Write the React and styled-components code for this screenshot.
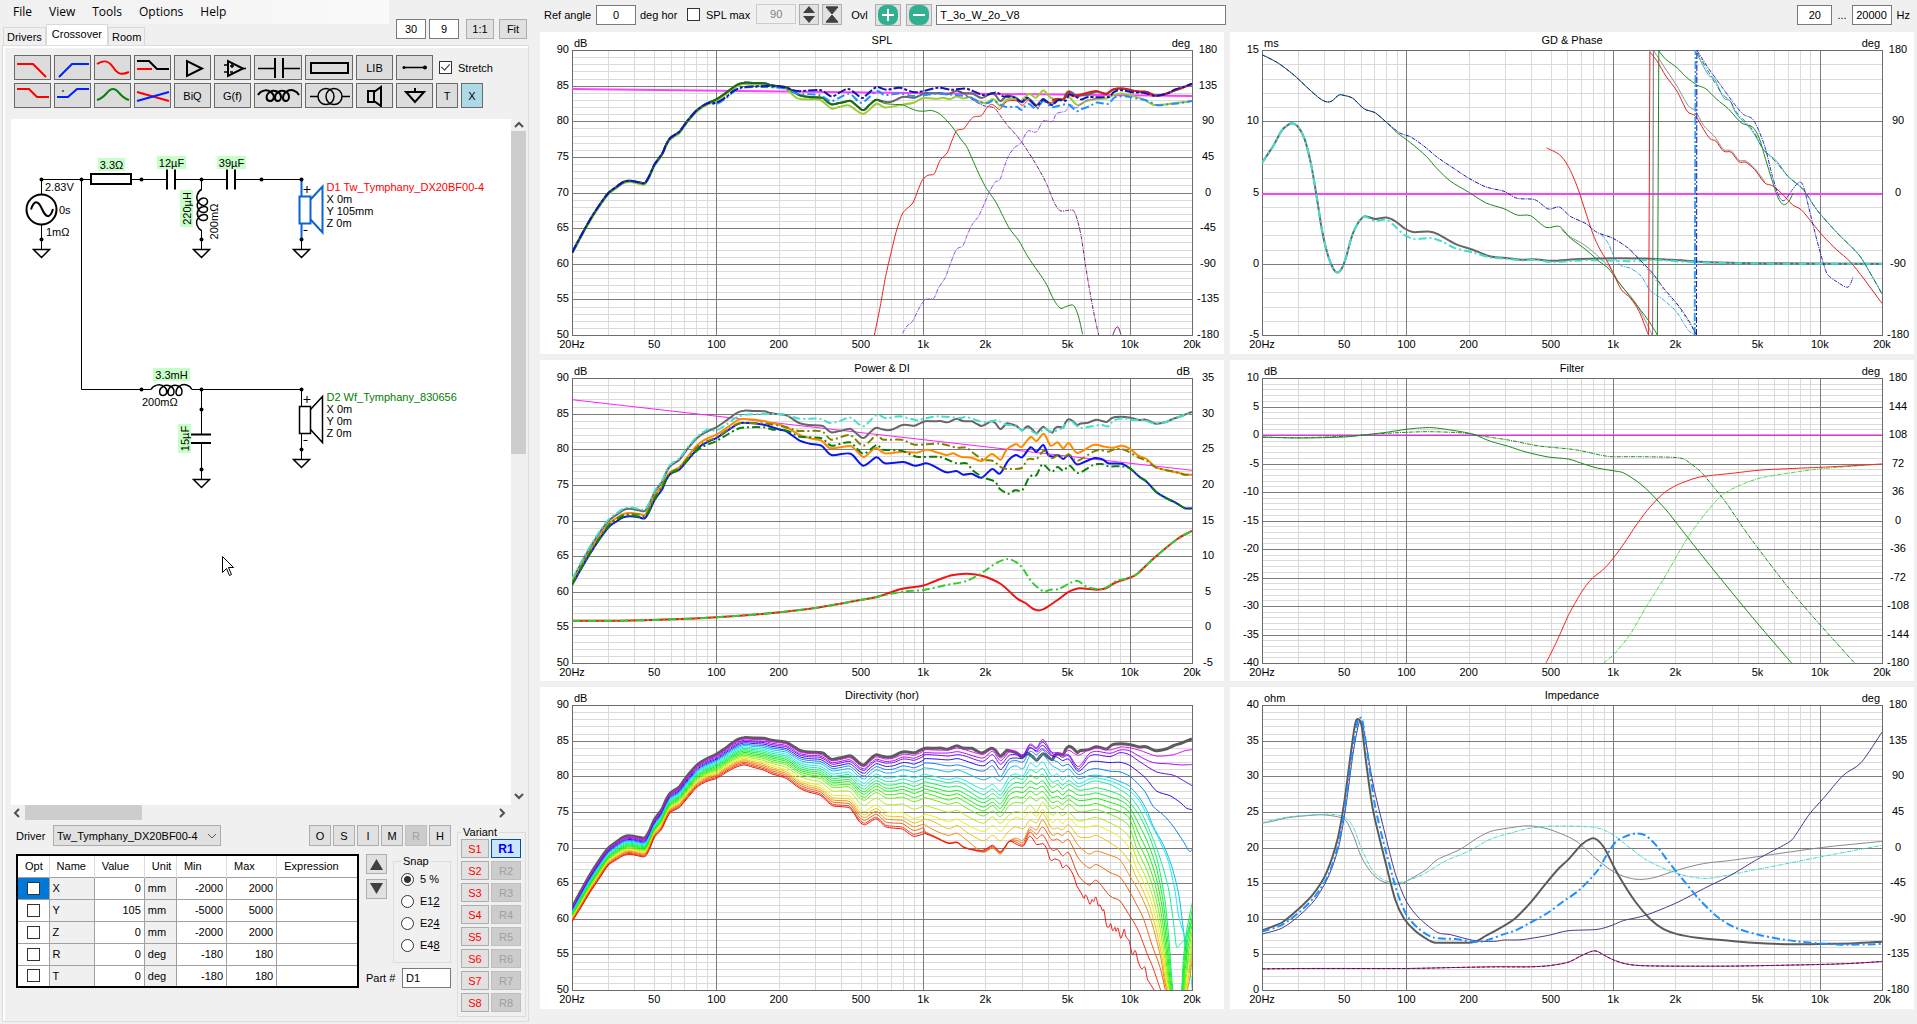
import React, { useLayoutEffect, useRef, useState } from "react";
import styled, { createGlobalStyle } from "styled-components";

/* ---------- curve data ---------- */

// [left, right, top, bottom] of the grid that a curve was digitised on
const SPL_GRID = [95, 1483, 152, 1005];
const SPL_FINE = [-623, 1236, -73, 780];
const PWR_GRID = [95, 1483, 82, 937];
const PWR_FINE = [-623, 1236, -53, 802];
const DIR_GRID = [95, 1483, 73, 934];
const DIR_FINE = [-923, 936, -32, 829];
const GD_GRID = [95, 1492, 152, 1005];
const FLT_GRID = [95, 1492, 82, 937];
const IMP_GRID = [95, 1492, 73, 934];

const trace = (grid, text) =>
  text
    .trim()
    .split(/\s+/)
    .map((pair) => {
      const [x, y] = pair.split(",").map(Number);
      return [(x - grid[0]) / (grid[1] - grid[0]), (y - grid[2]) / (grid[3] - grid[2])];
    });

const shift = (pts, dv) => pts.map(([u, v]) => [u, v + dv]);
const before = (pts, u) => pts.filter((p) => p[0] < u);

const axis = trace(
  PWR_GRID,
  `95,690 115,640 135,592 155,550 176,512 195,492 210,478 225,474 245,479 258,481 268,460 280,425 297,393 305,368
  315,346 335,328 345,310 355,292 372,266 385,252 400,241 418,230 435,215 450,200 465,186 480,180 500,181 525,182
  540,187 555,190 575,194 590,206 605,218 625,223 655,225 663,233 675,245 690,242 705,238 718,234 730,246 742,260
  750,261 760,248 770,236 777,231 790,236 802,239 815,235 830,225 840,222 862,225 872,219 882,213 890,211 905,212
  920,211 935,215 945,210 957,204 970,211 990,212 1000,219 1012,226 1022,220 1034,212 1043,218 1054,235 1066,221
  1070,218 1090,226 1102,239 1110,231 1116,227 1126,237 1135,248 1142,238 1150,228 1158,236 1170,246 1175,235
  1182,228 1195,230 1200,215 1207,206 1215,210 1226,224 1232,219 1250,216 1268,207 1280,210 1292,214 1305,201
  1323,198 1345,201 1365,208 1380,207 1402,219 1425,214 1440,205 1460,196 1475,188 1483,184`
);
const axisLow = before(axis, 0.225);
const axisMid = before(axis, 0.33);

const splCurves = [
  { c: "#ff40ff", w: 2, pts: trace(SPL_GRID, "95,269 1483,290") },
  {
    c: "#9acd32",
    w: 2,
    pts: [
      ...shift(axisMid, 0.005),
      ...trace(
        SPL_FINE,
        `0,38 20,44 50,70 80,75 120,76 155,102 180,97 208,93 250,118 290,88 315,99 360,92 400,85 430,71 470,73 490,70
        510,74 530,66 550,72 570,68 590,80 620,85 640,74 662,95 680,75 705,75 722,80 748,58 768,70 790,48 810,68
        825,75 845,78 865,66 892,92 920,80 950,74 980,72 1000,62 1025,57 1060,65 1090,75 1120,91 1150,90 1190,85 1236,80`
      ),
    ],
  },
  { c: "#666666", w: 2, pts: axis },
  { c: "#166b16", w: 2, pts: before(axis, 0.505) },
  {
    c: "#1c8a1c",
    pts: trace(
      SPL_GRID,
      `777,301 795,312 820,315 835,316 850,325 868,334 885,335 900,333 920,345 945,380 965,418 978,440 990,475 1005,520
      1020,560 1030,580 1045,610 1060,650 1075,688 1095,722 1110,758 1125,790 1140,818 1158,855 1170,890 1180,913
      1190,926 1200,920 1215,915 1222,925 1230,955 1238,1003`
    ),
  },
  {
    c: "#ee2020",
    pts: trace(
      SPL_GRID,
      `772,1005 785,920 797,830 810,755 820,700 832,650 840,632 858,610 870,570 880,540 892,527 905,524 912,505 920,480
      935,460 945,425 955,395 962,390 972,388 982,370 992,354 1000,351 1012,348 1022,328 1032,315 1040,318 1052,330
      1060,318 1070,305 1090,304 1103,318 1115,304 1122,308 1138,325 1150,302 1165,310 1180,300`
    ),
  },
  {
    c: "#d02020",
    w: 2,
    pts: trace(
      SPL_GRID,
      "1170,302 1180,299 1195,300 1207,278 1215,290 1235,285 1268,275 1290,283 1308,269 1330,267 1350,274 1380,277 1402,288 1430,280 1460,266 1483,254"
    ),
  },
  {
    c: "#7a1f7a",
    dash: "4 1 1 1",
    pts: trace(
      SPL_GRID,
      `960,275 980,290 1000,308 1020,320 1040,325 1052,345 1070,378 1085,400 1103,430 1125,475 1145,520 1160,560
      1170,595 1180,622 1190,634 1205,632 1217,632 1225,655 1235,710 1245,800 1255,880 1265,950 1274,1005`
    ),
  },
  { c: "#7a1f7a", pts: trace(SPL_GRID, "1306,1005 1312,985 1318,982 1324,1004") },
  {
    c: "#9346f0",
    dash: "4 1 1 1",
    pts: trace(
      SPL_GRID,
      `835,1000 845,978 857,965 870,930 885,900 905,895 915,865 930,835 940,800 955,750 970,738 980,705 992,672 1005,650
      1018,612 1030,575 1042,548 1053,540 1062,505 1072,470 1085,445 1100,430 1115,395 1135,397 1150,364 1170,366
      1180,342 1200,335 1210,315 1225,325 1245,303 1280,296`
    ),
  },
  {
    c: "#1e90ff",
    w: 2,
    dash: "8 3 2 3",
    pts: [
      ...axisLow,
      ...trace(SPL_GRID, "418,314 440,296 455,279 475,266 500,263 530,263"),
      ...trace(
        SPL_FINE,
        `0,40 20,44 55,58 120,62 155,80 208,58 245,85 290,50 315,62 360,57 405,65 470,58 530,62 570,68 600,83 625,86
        640,78 665,92 680,98 710,97 725,106 745,88 770,104 790,80 815,98 840,93 865,90 890,110 905,104 930,95 950,84
        985,88 1005,68 1040,66 1060,70 1100,78 1130,92 1160,90 1190,87 1236,80`
      ),
    ],
  },
  {
    c: "#1414b4",
    w: 2,
    dash: "9 2 3 2",
    pts: [
      ...axisLow,
      ...trace(SPL_GRID, "418,310 440,293 455,276 475,264 500,261 530,260"),
      ...trace(
        SPL_FINE,
        `0,36 20,40 55,50 120,47 155,66 180,54 208,44 245,70 262,60 290,38 320,46 360,40 400,53 430,50 475,40 515,46
        555,42 580,50 612,62 650,54 670,66 700,68 725,82 742,70 770,95 790,75 815,92 835,77 858,78 868,60 890,68
        905,75 925,68 985,68 1000,54 1020,47 1060,54 1090,55 1125,64 1160,58 1185,45 1215,36 1236,28`
      ),
    ],
  },
];

const gdStart =
  "95,166 130,190 165,225 200,268 225,297 240,307 252,305 268,287 280,288 300,297 325,328 350,340 375,368";
const gdRing =
  "95,490 120,440 140,392 155,375 163,371 175,380 190,415 205,490 218,590 230,690 242,760 255,805 265,818 275,805 285,770 295,720 305,685 320,655";

const gdCurves = [
  { c: "#ff40ff", w: 2, pts: trace(GD_GRID, "95,583 1492,583") },
  {
    c: "#909090",
    pts: trace(GD_GRID, "770,690 790,712 815,730 840,755 880,805 900,850 935,905 960,965 974,1005"),
  },
  { c: "#707070", straight: true, pts: trace(GD_GRID, "975,1005 977,152") },
  {
    c: "#909090",
    pts: trace(
      GD_GRID,
      "978,155 1000,200 1030,260 1055,318 1072,335 1090,378 1115,412 1135,450 1152,453 1170,482 1185,484 1205,506 1228,547"
    ),
  },
  {
    c: "#666666",
    w: 2,
    pts: trace(
      GD_GRID,
      `${gdRing} 330,650 350,658 375,653 395,664 415,685 435,697 470,695 490,702 530,732 570,750 610,770 650,775 680,780
      710,778 750,783 800,778 850,776 900,775 960,776 1020,780 1100,787 1200,790 1492,792`
    ),
  },
  {
    c: "#40e0d0",
    w: 2,
    dash: "8 3 2 3",
    pts: trace(
      GD_GRID,
      `${gdRing} 330,652 350,664 375,660 395,680 415,705 440,718 475,715 500,725 530,745 570,758 610,773 650,777 680,782
      710,780 750,787 800,783 850,781 920,784 980,780 1050,786 1200,791 1492,792`
    ),
  },
  {
    c: "#1c8a1c",
    pts: trace(
      GD_GRID,
      `${gdStart} 400,400 430,430 465,470 490,508 520,545 560,577 600,610 640,627 670,646 700,648 735,683 765,680
      790,715 825,750 855,785 875,805 895,840 930,900 965,960 986,1005`
    ),
  },
  { c: "#1c8a1c", straight: true, pts: trace(GD_GRID, "986,1005 989,152") },
  {
    c: "#1c8a1c",
    pts: trace(
      GD_GRID,
      `989,155 1005,180 1030,205 1050,232 1075,257 1095,268 1120,300 1145,327 1175,370 1200,382 1215,415 1230,480
      1245,545 1258,595 1270,615 1282,605 1292,580`
    ),
  },
  {
    c: "#ee2020",
    pts: trace(
      GD_GRID,
      "736,445 765,465 785,500 805,560 820,620 840,700 855,745 875,790 890,830 905,870 925,895 945,935 965,1003"
    ),
  },
  { c: "#ee2020", straight: true, pts: trace(GD_GRID, "966,1005 969,156") },
  {
    c: "#dd2020",
    pts: trace(
      GD_GRID,
      `969,158 985,185 1005,230 1030,275 1053,335 1072,350 1090,390 1105,418 1118,425 1135,455 1152,458 1170,487
      1185,488 1205,510 1228,550 1245,558 1265,580 1290,615 1310,630 1335,670 1360,710 1390,750 1420,785 1450,835
      1475,880 1492,910`
    ),
  },
  {
    c: "#3a9cf0",
    dash: "4 1 1 1",
    pts: trace(
      GD_GRID,
      "860,705 875,730 890,775 905,798 925,805 950,830 970,872 1000,900 1030,938 1055,990 1068,1002"
    ),
  },
  { c: "#3a9cf0", w: 2, dash: "8 2 2 2", straight: true, pts: trace(GD_GRID, "1070,1005 1072,152") },
  {
    c: "#3a9cf0",
    pts: trace(
      GD_GRID,
      "1074,160 1100,225 1115,240 1135,295 1150,305 1165,345 1200,395 1225,450 1255,485 1280,530 1315,570 1345,630 1395,705 1440,765 1470,830 1492,882"
    ),
  },
  {
    c: "#1c8a1c",
    dash: "5 2 1 2",
    pts: trace(
      GD_GRID,
      "1076,160 1100,215 1130,280 1150,305 1165,340 1200,390 1225,450 1255,490 1280,530 1315,570 1345,630 1395,705 1440,765 1470,830 1492,882"
    ),
  },
  {
    c: "#1c8a1c",
    dash: "1 4",
    pts: trace(GD_GRID, "925,750 950,790 975,828 1000,872 1035,925 1060,975 1073,1003"),
  },
  {
    c: "#1414b4",
    dash: "4 1 1 1",
    pts: trace(
      GD_GRID,
      `${gdStart} 405,400 430,412 460,440 490,473 520,500 560,535 600,562 640,575 670,596 710,600 740,628 765,622
      790,650 825,672 850,698 885,715 920,745 950,785 975,820 1000,865 1035,920 1060,970 1073,1003`
    ),
  },
  { c: "#1414b4", dash: "6 2 2 2", straight: true, pts: trace(GD_GRID, "1074,1005 1075,152") },
  {
    c: "#2a2ac8",
    dash: "4 1 1 1",
    pts: trace(
      GD_GRID,
      `1076,155 1100,205 1130,260 1160,315 1180,345 1200,358 1215,395 1230,450 1245,530 1260,590 1272,602 1290,570
      1305,548 1315,560 1330,640 1345,720 1360,790 1370,825 1395,850 1412,862 1420,855 1427,830`
    ),
  },
];

const diTail = "1340,683 1360,670 1400,620 1450,565 1483,541";
const diHead = "95,810 200,810 320,806 418,800 520,790 640,772 740,748";
const blueTail = "1050,218 1080,245 1100,258 1130,290 1160,308 1190,323 1215,338 1236,338";

const powerCurves = [
  { c: "#ff20ff", pts: trace(PWR_GRID, "95,147 1483,359") },
  { c: "#666666", w: 2, pts: axis },
  {
    c: "#40e0d0",
    w: 2,
    dash: "8 3 2 3",
    pts: [
      ...shift(axisLow, -0.005),
      ...trace(PWR_GRID, "418,240 440,222 460,203 480,193 520,190"),
      ...trace(
        PWR_FINE,
        `0,55 20,58 60,69 120,69 150,82 180,76 212,66 250,92 290,58 320,68 360,62 410,74 430,70 475,62 540,67 560,64
        612,80 650,74 680,87 710,90 725,105 740,96 770,114 795,98 815,108 845,98 870,75 890,90 905,97 960,88 985,92
        1000,75 1030,68 1060,73 1090,73 1125,84 1165,77 1190,66 1236,50`
      ),
    ],
  },
  {
    c: "#ff8c00",
    w: 2,
    pts: [
      ...trace(
        PWR_GRID,
        `95,698 135,603 176,522 195,502 210,490 225,487 245,490 258,493 268,472 280,436 297,405 305,382 315,364 335,350
        350,325 372,288 385,273 400,262 418,252 445,228 465,209 480,205 525,211 540,217`
      ),
      ...trace(
        PWR_FINE,
        `0,87 30,100 60,118 100,130 125,135 150,157 180,155 215,152 250,184 275,165 290,156 315,173 370,168 410,171
        440,162 465,168 500,178 520,173 545,184 575,186 605,196 636,175 662,192 680,162 708,145 725,154 752,124
        770,136 792,114 812,150 833,140 850,158 867,142 892,172 940,148 975,153 1000,156 1025,150 1048,158 1075,180
        1100,190 1130,216 1190,230 1215,237 1236,237`
      ),
    ],
  },
  {
    c: "#0a14ee",
    w: 2,
    pts: [
      ...trace(
        PWR_GRID,
        `95,703 135,610 176,531 195,512 210,500 225,497 245,500 258,503 268,482 280,448 297,416 305,390 315,370 335,357
        350,334 372,300 385,284 400,273 418,262 445,238 465,221 480,216 525,222 540,228`
      ),
      ...trace(
        PWR_FINE,
        `0,102 20,107 60,135 90,144 125,150 155,178 212,174 250,210 290,185 315,203 370,199 405,210 440,203 465,213
        500,230 530,226 550,237 575,234 605,246 637,220 660,234 685,195 708,178 727,185 752,155 770,168 790,148
        805,178 820,183 833,178 850,190 867,178 890,206 915,198 945,187 970,192 985,203 1025,204 ${blueTail}`
      ),
    ],
  },
  {
    c: "#808000",
    w: 2,
    dash: "8 3 2 3",
    pts: [
      ...trace(
        PWR_GRID,
        `95,700 135,605 176,524 195,504 210,492 225,489 245,492 258,495 268,474 280,438 297,407 305,384 315,366 335,352
        350,329 372,294 385,280 400,270 418,260 445,236 465,219 480,217 525,218 540,221`
      ),
      ...trace(
        PWR_FINE,
        `0,90 30,98 60,106 125,107 155,132 210,118 250,150 290,119 310,132 365,132 405,147 480,144 530,156 560,156
        580,172 610,192 640,196 665,216 690,220 725,217 745,190 770,190 792,165 815,188 835,178 850,187 867,176
        892,195 940,168 960,163 985,168 1000,162 1025,160 1045,168 1075,185 1100,195 1130,216 1190,230 1215,237 1236,237`
      ),
    ],
  },
  {
    c: "#0a800a",
    w: 2,
    dash: "8 3 2 3",
    pts: [
      ...trace(
        PWR_GRID,
        `95,702 135,608 176,528 195,508 210,497 225,494 245,498 258,500 268,480 280,446 297,412 305,389 315,370 335,356
        350,334 372,303 385,290 400,281 418,271 445,250 465,235 485,230 525,230 545,237`
      ),
      ...trace(
        PWR_FINE,
        `0,100 30,108 60,123 125,128 155,150 210,140 250,174 290,148 310,162 365,165 410,183 480,184 530,203 560,203
        580,225 610,245 645,258 660,280 685,294 705,284 727,284 745,250 758,238 770,238 788,206 815,228 833,214
        850,225 870,210 895,232 940,208 965,205 985,212 1025,212 ${blueTail}`
      ),
    ],
  },
  {
    c: "#f01414",
    w: 2,
    pts: trace(
      PWR_GRID,
      `${diHead} 780,738 830,716 880,705 910,690 945,674 980,669 1015,676 1055,700 1090,742 1110,757 1128,775 1142,779
      1158,770 1185,745 1205,725 1230,713 1270,717 1290,713 1310,697 ${diTail}`
    ),
  },
  {
    c: "#32cd32",
    w: 2,
    dash: "8 3 2 3",
    pts: trace(
      PWR_GRID,
      `${diHead} 800,732 840,722 882,718 930,704 980,690 1020,660 1045,637 1070,625 1090,635 1105,655 1125,695
      1150,722 1165,717 1185,715 1210,697 1228,691 1250,710 1285,714 1315,690 ${diTail}`
    ),
  },
];

const filterCurves = [
  { c: "#ff10ff", pts: trace(FLT_GRID, "95,253 1492,253") },
  {
    c: "#1c8a1c",
    pts: trace(
      FLT_GRID,
      `95,259 180,262 280,259 330,252 380,244 420,236 450,232 480,231 520,238 560,247 580,255 610,272 650,287 690,304
      740,319 785,325 820,340 850,352 890,361 910,367 940,392 965,420 985,448 1010,485 1060,570 1120,670 1200,800 1288,937`
    ),
  },
  {
    c: "#1c8a1c",
    dash: "4 1 1 1",
    pts: trace(
      FLT_GRID,
      `95,260 180,261 280,257 350,250 420,245 475,243 550,247 590,256 650,268 720,286 800,297 860,314 885,318 940,318
      1020,320 1045,325 1060,338 1085,365 1110,405 1140,455 1200,570 1300,742 1430,937`
    ),
  },
  {
    c: "#44dd44",
    dash: "4 1 1 1",
    pts: trace(
      FLT_GRID,
      `865,937 890,908 925,850 960,770 1000,685 1050,570 1090,495 1130,435 1170,405 1210,385 1250,374 1350,355 1492,340`
    ),
  },
  {
    c: "#ff2020",
    pts: trace(
      FLT_GRID,
      `735,937 760,870 785,795 810,735 825,705 840,682 865,655 885,625 910,580 940,520 970,468 1000,428 1030,403
      1075,381 1110,374 1160,367 1220,358 1300,353 1400,347 1492,340`
    ),
  },
];

const minimumLoad = trace(
  IMP_GRID,
  `95,870 200,869 420,869 530,866 620,864 700,864 745,860 785,850 815,830 838,817 850,817 865,828 885,842 915,855
  960,861 1100,862 1200,861 1350,857 1420,854 1492,848`
);

const impedanceCurves = [
  {
    c: "#888888",
    pts: trace(
      IMP_GRID,
      `95,430 120,424 150,414 190,408 235,405 280,418 300,465 320,535 345,585 370,608 405,614 430,598 465,570 490,540
      540,510 580,475 610,455 650,445 695,438 740,448 800,482 850,540 885,575 915,593 945,600 980,594 1030,572
      1090,552 1160,541 1300,514 1380,500 1492,485`
    ),
  },
  {
    c: "#40d8cc",
    dash: "4 1 1 1",
    pts: trace(
      IMP_GRID,
      `95,429 150,412 200,406 250,403 280,412 300,440 320,510 345,575 370,602 400,610 430,600 460,583 510,543 560,515
      610,478 660,458 700,445 750,439 840,442 880,460 920,500 960,540 1010,572 1060,592 1100,597 1140,588 1240,562
      1380,525 1492,497`
    ),
  },
  {
    c: "#503488",
    pts: trace(
      IMP_GRID,
      `95,765 140,747 180,708 215,660 245,590 268,500 285,370 300,220 312,135 318,122 326,160 345,310 370,450 395,580
      420,665 450,718 490,760 520,767 575,785 620,787 640,783 680,782 740,769 785,755 850,751 885,738 910,724 960,708
      1030,670 1090,628 1150,588 1210,540 1240,518 1285,485 1300,460 1330,400 1360,355 1405,285 1445,247 1492,155`
    ),
  },
  {
    c: "#5c5c5c",
    w: 2,
    pts: trace(
      IMP_GRID,
      `95,754 140,730 175,692 210,645 240,580 265,480 280,370 295,220 305,130 312,116 320,140 330,250 345,390 370,530
      395,660 415,718 440,755 470,783 485,791 520,791 570,790 600,770 640,740 665,718 700,670 730,620 760,572 785,540
      815,495 838,476 850,480 865,502 880,540 900,592 935,665 970,720 1000,750 1030,765 1075,776 1130,783 1200,791
      1290,796 1350,795 1430,793 1492,788`
    ),
  },
  {
    c: "#1e90ff",
    w: 2,
    dash: "8 3 2 3",
    pts: trace(
      IMP_GRID,
      `95,758 140,737 180,698 215,650 245,585 268,490 283,370 298,220 310,125 316,112 322,125 335,240 350,380 375,520
      400,640 420,705 445,745 480,775 530,780 580,789 610,780 640,765 665,755 700,730 740,700 775,665 810,632 850,575
      870,530 890,490 910,472 938,461 960,468 985,500 1010,545 1040,595 1080,660 1120,712 1160,745 1220,769 1300,787
      1400,797 1492,795`
    ),
  },
  { c: "#e01848", pts: minimumLoad },
  { c: "#301898", dash: "3 2", pts: minimumLoad },
];

/* ---------- directivity fan: 20 off-axis angles ---------- */

const rear = trace(
  DIR_GRID,
  `95,728 115,685 135,640 155,600 176,558 195,540 212,527 225,524 240,528 258,531 268,510 280,472 295,450 305,422
  315,398 335,383 350,360 372,325 385,312 400,302 418,295 440,277 460,262 480,254 500,261 525,270 540,280 555,286
  575,295 590,310 605,325 625,336 650,345 663,360 678,377 695,380 715,383 725,398 738,425 750,435 760,428 775,417
  785,425 797,441 815,445 835,448 850,462 862,470 882,462`
);

const midWeights = [
  0.03, 0.065, 0.09, 0.135, 0.18, 0.23, 0.3, 0.35, 0.4, 0.445, 0.485, 0.535, 0.585, 0.675, 0.785, 0.84, 0.885, 0.93,
  0.975, 1,
];

// level of every angle at a set of frequencies above 1 kHz
const fanColumns = {
  135: [103, 112, 118, 130, 143, 158, 177, 188, 200, 212, 222, 234, 248, 272, 298, 312, 330, 350, 353, 356],
  165: [104, 113, 119, 131, 145, 162, 184, 194, 207, 219, 230, 242, 256, 280, 306, 322, 347, 365, 367, 368],
  205: [104, 113, 122, 134, 152, 170, 193, 203, 216, 229, 242, 255, 268, 292, 320, 342, 362, 384, 385, 386],
  232: [98, 109, 118, 130, 149, 164, 188, 199, 213, 226, 236, 248, 262, 286, 313, 332, 355, 382, 383, 384],
  255: [103, 114, 122, 136, 154, 172, 196, 208, 222, 236, 248, 260, 276, 300, 326, 348, 372, 398, 399, 400],
  308: [117, 128, 138, 152, 168, 194, 222, 238, 252, 263, 276, 288, 303, 325, 350, 378, 412, 412, 410, 407],
  338: [101, 108, 118, 135, 152, 184, 208, 222, 236, 250, 262, 272, 288, 306, 332, 362, 400, 398, 395, 392],
  362: [128, 136, 147, 163, 184, 197, 227, 240, 250, 266, 280, 292, 305, 325, 350, 378, 418, 415, 413, 411],
  388: [106, 110, 120, 132, 142, 160, 185, 200, 216, 228, 240, 256, 272, 300, 320, 348, 380, 380, 380, 380],
  408: [108, 112, 118, 128, 136, 152, 176, 188, 202, 216, 230, 245, 262, 290, 308, 336, 370, 376, 382, 388],
  430: [120, 118, 122, 128, 140, 160, 182, 192, 204, 218, 232, 248, 264, 292, 312, 342, 376, 383, 390, 394],
  450: [96, 86, 90, 98, 108, 122, 145, 164, 180, 198, 216, 228, 245, 270, 290, 316, 338, 345, 352, 364],
  470: [110, 96, 100, 106, 118, 133, 155, 172, 190, 208, 222, 240, 258, 290, 304, 324, 345, 358, 372, 389],
  489: [100, 72, 80, 90, 104, 118, 140, 160, 178, 198, 214, 230, 246, 262, 285, 296, 315, 337, 361, 387],
  515: [122, 110, 114, 120, 132, 150, 182, 200, 216, 232, 246, 262, 280, 300, 322, 340, 360, 375, 405, 437],
  533: [112, 112, 118, 126, 140, 160, 176, 196, 208, 226, 244, 258, 274, 292, 312, 340, 356, 373, 405, 434],
  548: [118, 122, 126, 136, 152, 170, 195, 210, 222, 240, 252, 268, 284, 302, 326, 345, 362, 384, 424, 460],
  567: [105, 118, 122, 132, 148, 162, 180, 196, 208, 224, 240, 254, 268, 292, 310, 330, 350, 376, 415, 462],
  595: [120, 154, 162, 168, 178, 190, 205, 215, 225, 240, 256, 272, 290, 318, 335, 365, 392, 430, 482, 522],
  627: [102, 116, 124, 142, 164, 182, 192, 202, 222, 238, 254, 270, 288, 312, 336, 368, 418, 460, 512, 565],
  650: [98, 108, 118, 138, 160, 180, 188, 198, 218, 234, 250, 266, 284, 308, 332, 362, 409, 450, 498, 552],
  690: [104, 114, 124, 142, 168, 188, 197, 208, 228, 246, 262, 280, 298, 324, 350, 384, 422, 474, 545, 636],
  720: [95, 104, 112, 141, 170, 199, 210, 224, 240, 256, 272, 290, 312, 340, 368, 405, 436, 488, 560, 656],
  748: [97, 106, 118, 150, 182, 213, 226, 243, 262, 276, 292, 310, 335, 368, 400, 440, 482, 530, 603, 682],
};

const fanTails = {
  1: "780,105 830,122 880,118 915,106 937,103",
  2: "780,124 820,142 870,146 900,149 937,148",
  3: "780,140 830,170 880,180 910,196 937,212",
  4: "780,174 800,192 830,228 870,242 900,262 920,280 937,284",
  5: "765,197 795,230 820,275 850,300 880,335 910,380 928,410 937,404",
  6: "780,250 800,285 820,335 850,390 870,440 885,490 898,550 907,620 915,690 925,775 931,740 937,690",
  7: "780,260 810,320 840,380 865,440 885,530 895,600 905,640 914,665 925,720 937,829",
  8: "780,285 810,350 840,430 865,520 880,620 888,690 892,700 905,685 915,675 937,620",
};
const firstTail = [[780, 305], [810, 370], [835, 450], [855, 560], [868, 690], [880, 835], [903, 835], [910, 740], [920, 650], [937, 565]];
const lastTail = [[765, 510], [785, 548], [805, 595], [825, 660], [843, 735], [864, 835], [918, 835], [924, 820], [930, 790], [937, 735]];

for (let k = 9; k <= 17; k++) {
  const t = (k - 9) / 8;
  fanTails[k] = firstTail
    .map(([x, y], i) => `${x + (lastTail[i][0] - x) * t},${y + (lastTail[i][1] - y) * t}`)
    .join(" ");
}
fanTails[18] = "765,562 790,612 815,690 840,760 856,829";
fanTails[19] = "765,630 780,662 800,715 820,765 842,829";
fanTails[20] = "757,722 766,710 775,745 785,765 795,760 802,795 812,812 822,829";

const rearRipple =
  "500,402 512,437 525,433 540,440 548,460 560,452 575,472 583,490 590,512 600,530 606,540 612,552 616,543 620,545 630,570 636,556 641,562 648,548 655,575 660,572 668,590 672,588 680,635 688,638 692,628 698,650 705,640 708,652 714,642 722,672 728,660 733,645 738,668 748,682";

const hues = [295, 281, 265, 248, 210, 194, 178, 158, 142, 128, 118, 110, 96, 78, 62, 48, 34, 22, 12, 0];

const valueAt = (pts, u) => {
  const i = Math.max(1, pts.findIndex((p) => p[0] >= u));
  const [a, b] = [pts[i - 1], pts[i]];
  return a[1] + ((b[1] - a[1]) * (u - a[0])) / (b[0] - a[0]);
};

const fanCurve = (k) => {
  const low = rear.map(([u, v]) => {
    const front = valueAt(axis, u);
    const mix = Math.min(1, Math.max(0, (u - 0.25) / 0.25));
    const weight = (k / 20) * (1 - mix) + midWeights[k - 1] * mix;
    return [u, front + (v - front) * weight];
  });
  const columns = Object.entries(fanColumns)
    .filter(([x]) => k < 20 || Number(x) < 500)
    .map(([x, levels]) => `${x},${levels[k - 1]}`)
    .join(" ");
  const high = `${columns} ${k === 20 ? rearRipple : ""} ${fanTails[k]}`;
  return { c: `hsl(${hues[k - 1]}, 88%, 50%)`, pts: [...low, ...trace(DIR_FINE, high)] };
};

const directivityCurves = [
  { c: "#5c5c5c", w: 3, pts: axis },
  ...Array.from({ length: 20 }, (_, i) => fanCurve(i + 1)),
];

/* ---------- chart ---------- */

const steps = (from, to, step) => {
  const list = [];
  for (let v = from; step < 0 ? v >= to : v <= to; v += step) list.push(v);
  return list;
};

const charts = [
  { title: "SPL", unit: "dB", top: 90, bottom: 50, unitRight: "deg", right: steps(180, -180, -45), curves: splCurves },
  { title: "GD & Phase", unit: "ms", top: 15, bottom: -5, unitRight: "deg", right: steps(180, -180, -90), curves: gdCurves },
  { title: "Power & DI", unit: "dB", top: 90, bottom: 50, unitRight: "dB", right: steps(35, -5, -5), curves: powerCurves },
  { title: "Filter", unit: "dB", top: 10, bottom: -40, unitRight: "deg", right: steps(180, -180, -36), curves: filterCurves },
  { title: "Directivity (hor)", unit: "dB", top: 90, bottom: 50, curves: directivityCurves },
  { title: "Impedance", unit: "ohm", top: 40, bottom: 0, unitRight: "deg", right: steps(180, -180, -45), curves: impedanceCurves },
];

const freqLabels = [
  [20, "20Hz"],
  [50, "50"],
  [100, "100"],
  [200, "200"],
  [500, "500"],
  [1000, "1k"],
  [2000, "2k"],
  [5000, "5k"],
  [10000, "10k"],
  [20000, "20k"],
];
const freqLines = [10, 100, 1000, 10000]
  .flatMap((d) => steps(1, 9, 1).map((n) => n * d))
  .filter((f) => f > 20 && f < 20000);
const logPos = (f) => Math.log10(f / 20) / 3;

const pathOf = ({ pts, straight }, px, py) => {
  const p = pts.map(([u, v]) => [px(u), py(v)]);
  let d = `M${p[0][0].toFixed(1)} ${p[0][1].toFixed(1)}`;
  for (let i = 1; i < p.length; i++) {
    if (straight || p.length < 3) {
      d += `L${p[i][0].toFixed(1)} ${p[i][1].toFixed(1)}`;
      continue;
    }
    const a = p[Math.max(0, i - 2)];
    const b = p[i - 1];
    const c = p[i];
    const e = p[Math.min(p.length - 1, i + 1)];
    const nums = [b[0] + (c[0] - a[0]) / 7, b[1] + (c[1] - a[1]) / 7, c[0] - (e[0] - b[0]) / 7, c[1] - (e[1] - b[1]) / 7, c[0], c[1]];
    d += `C${nums.map((n) => n.toFixed(1)).join(" ")}`;
  }
  return d;
};

const Chart = ({ title, unit, top, bottom, unitRight, right = [], curves }) => {
  const box = useRef(null);
  const [size, setSize] = useState({ w: 684, h: 321 });

  useLayoutEffect(() => {
    const measure = () => setSize({ w: box.current.clientWidth, h: box.current.clientHeight });
    measure();
    const observer = new ResizeObserver(measure);
    observer.observe(box.current);
    return () => observer.disconnect();
  }, []);

  const left = 32;
  const width = size.w - 64;
  const y0 = 18;
  const height = size.h - 37;
  const px = (u) => left + u * width;
  const py = (v) => y0 + v * height;
  const line = (n) => Math.round(n) + 0.5;
  const span = top - bottom;
  const clip = `clip-${title.replace(/\W/g, "")}`;

  return (
    <ChartCard ref={box}>
      <ChartSvg role="img" aria-label={title}>
        <clipPath id={clip}>
          <rect x={left} y={y0} width={width} height={height} />
        </clipPath>
        {freqLines.map((f) => (
          <line key={f} x1={line(px(logPos(f)))} x2={line(px(logPos(f)))} y1={y0} y2={y0 + height} stroke="#dadada" />
        ))}
        {steps(bottom, top, 1).map((v) => (
          <line key={v} x1={left} x2={left + width} y1={line(py((top - v) / span))} y2={line(py((top - v) / span))} stroke="#dadada" />
        ))}
        {[100, 1000, 10000].map((f) => (
          <line key={f} x1={line(px(logPos(f)))} x2={line(px(logPos(f)))} y1={y0} y2={y0 + height} stroke="#7c7c7c" />
        ))}
        {steps(bottom, top, 5).map((v) => (
          <line key={v} x1={left} x2={left + width} y1={line(py((top - v) / span))} y2={line(py((top - v) / span))} stroke="#7c7c7c" />
        ))}
        <rect x={left + 0.5} y={y0 + 0.5} width={width} height={height} fill="none" stroke="#6c6c6c" />
        <g clipPath={`url(#${clip})`} fill="none" strokeLinejoin="round">
          {curves.map((curve, i) => (
            <path key={i} d={pathOf(curve, px, py)} stroke={curve.c} strokeWidth={curve.w || 1} strokeDasharray={curve.dash} />
          ))}
        </g>
        <text x={left + width / 2} y="12" textAnchor="middle">
          {title}
        </text>
        <text x={left + 2} y="15">
          {unit}
        </text>
        <text x={left + width - 2} y="15" textAnchor="end">
          {unitRight}
        </text>
        {steps(bottom, top, 5).map((v) => (
          <text key={v} x={left - 3} y={py((top - v) / span) + 3} textAnchor="end">
            {v}
          </text>
        ))}
        {right.map((v, i) => (
          <text key={v} x={left + width + 16} y={py(i / (right.length - 1)) + 3} textAnchor="middle">
            {v}
          </text>
        ))}
        {freqLabels.map(([f, label]) => (
          <text key={f} x={px(logPos(f))} y={y0 + height + 13} textAnchor="middle">
            {label}
          </text>
        ))}
      </ChartSvg>
    </ChartCard>
  );
};

/* ---------- schematic ---------- */

const Ground = ({ x, y }) => (
  <g fill="none">
    <path d={`M${x} ${y}v10`} stroke="#000" />
    <path d={`M${x - 8} ${y + 10}h16l-8 8z`} stroke="#000" strokeWidth="1.5" />
  </g>
);

const Nodes = ({ at }) => at.map(([x, y]) => <circle key={`${x}-${y}`} cx={x} cy={y} r="2" />);

const Tag = ({ x, y, w, children }) => (
  <g>
    <rect x={x} y={y} width={w} height="13" fill="#c8ffc8" />
    <text x={x + w / 2} y={y + 11} textAnchor="middle">
      {children}
    </text>
  </g>
);

const VerticalTag = ({ x, y, h, plain, children }) => (
  <g>
    {!plain && <rect x={x} y={y} width="13" height={h} fill="#c8ffc8" />}
    <text transform={`translate(${x + 11} ${y + h / 2}) rotate(-90)`} textAnchor="middle">
      {children}
    </text>
  </g>
);

const coilPath =
  "M0 0C2 -4 9 -7 14 -2C18 2 15 6 12 6C8 6 7 0 12 -3C16 -6 23 -3 23 2C23 5 21 6 20 6C16 6 16 0 20 -3C25 -6 31 -3 31 2C31 5 29 6 28 6C24 6 24 0 28 -3C33 -7 39 -4 41 0";

const Driver = ({ x, y, color, name, nameColor, pos, active }) => (
  <g>
    <path d={`M${x} ${y}v17M${x} ${y + 44}v16`} stroke={color} strokeWidth={active ? 2 : 1} />
    <rect x={x - 2} y={y + 17} width="11" height="27" fill="#fff" stroke={color} strokeWidth={active ? 2 : 1.5} />
    <path d={`M${x + 9} ${y + 20}l12 -13v46l-12 -13`} fill="none" stroke={color} strokeWidth={active ? 2 : 1.5} />
    <path d={`M${x + 2} ${y + 10}h7M${x + 5.5} ${y + 6.5}v7M${x + 2} ${y + 51}h4`} stroke="#000" />
    <text x={x + 25} y={y + 11} fill={nameColor}>
      {name}
    </text>
    {pos.map((line, i) => (
      <text key={line} x={x + 25} y={y + 23 + i * 12}>
        {line}
      </text>
    ))}
  </g>
);

const Schematic = () => (
  <SchematicSvg viewBox="11 119 500 680" width="500" height="680" role="img" aria-label="Crossover schematic">
    <path
      d="M41.5 179.5H90M41.5 179.5V194M41.5 225V240M131 179.5H167M175 179.5H227M235 179.5H301.5M81.5 179.5V389.5H151M192 389.5H301.5M201.5 179.5V190M201.5 230V240M201.5 389.5V434M201.5 443V469.5"
      fill="none"
      stroke="#000"
    />
    <circle cx="41.5" cy="209.5" r="15" fill="none" stroke="#000" strokeWidth="2" />
    <path d="M31 209.5C34 200 38 200 42 209S50 219 53 209" fill="none" stroke="#000" strokeWidth="2" />
    <rect x="91" y="174" width="40" height="10" fill="#fff" stroke="#000" strokeWidth="2" />
    <path d="M167 169.500v20M175 169.500v20M227 169.500v20M235 169.500v20M191 434.500h20M191 443h20" stroke="#000" strokeWidth="2" />
    <path d={coilPath} transform="translate(151 389.500)" fill="none" stroke="#000" strokeWidth="1.500" />
    <path d={coilPath} transform="translate(201.500 189.500) rotate(90) scale(1 -1)" fill="none" stroke="#000" strokeWidth="1.500" />
    <Ground x={41.5} y={239.5} />
    <Ground x={201.5} y={239.5} />
    <Ground x={301.5} y={239.5} />
    <Ground x={201.5} y={469.5} />
    <Ground x={301.5} y={449.5} />
    <Driver
      x={301.5}
      y={179.5}
      color="#0a64d2"
      active
      name="D1 Tw_Tymphany_DX20BF00-4"
      nameColor="#ff0000"
      pos={["X 0m", "Y 105mm", "Z 0m"]}
    />
    <Driver
      x={301.5}
      y={389.5}
      color="#000"
      name="D2 Wf_Tymphany_830656"
      nameColor="#008000"
      pos={["X 0m", "Y 0m", "Z 0m"]}
    />
    <Nodes
      at={[
        [41.5, 179.5], [81.5, 179.5], [141.5, 179.5], [201.5, 179.5], [261.5, 179.5], [301.5, 179.5],
        [41.5, 239.5], [201.5, 239.5], [301.5, 239.5], [141.5, 389.5], [201.5, 389.5], [301.5, 389.5],
        [201.5, 409.5], [201.5, 469.5], [301.5, 449.5],
      ]}
    />
    <Tag x={98} y={158} w={27}>3.3Ω</Tag>
    <Tag x={157} y={156} w={29}>12µF</Tag>
    <Tag x={217} y={156} w={29}>39µF</Tag>
    <Tag x={153} y={368} w={37}>3.3mH</Tag>
    <VerticalTag x={180} y={190} h={37}>220µH</VerticalTag>
    <VerticalTag x={207} y={204} h={35} plain>200mΩ</VerticalTag>
    <VerticalTag x={178} y={424} h={29}>15µF</VerticalTag>
    <text x="45" y="191">2.83V</text>
    <text x="59" y="214">0s</text>
    <text x="46" y="236">1mΩ</text>
    <text x="142" y="406">200mΩ</text>
    <path d="M222.500 556.500v16l4 -4 3 7 2 -1 -3 -7h5z" fill="#fff" stroke="#000" />
  </SchematicSvg>
);

/* ---------- toolbar icons, drawn on a 37 x 25 or 48 x 25 button ---------- */

const Glyph = ({ w = 35, children }) => (
  <svg width={w} height="23" viewBox={`1 1 ${w} 23`} fill="none" stroke="#000" strokeWidth="2" aria-hidden="true">
    {children}
  </svg>
);

const toolRows = [
  [
    { name: "Low pass", icon: <Glyph><path d="M3 9H19L32 22" stroke="#f00" /></Glyph> },
    { name: "High pass", icon: <Glyph><path d="M5 22L18 9H35" stroke="#0020ff" /></Glyph> },
    { name: "Phase", icon: <Glyph><path d="M3 9C9 5 14 5 19 12C24 20 28 20 35 17" stroke="#f00" /></Glyph> },
    {
      name: "Shelving",
      icon: <Glyph><path d="M3 14H18" stroke="#f00" /><path d="M3 6H15L23 14H35" /></Glyph>,
    },
    { name: "Buffer", icon: <Glyph><path d="M13 6V21L28 13.500Z" /></Glyph> },
    {
      name: "Op amp",
      icon: <Glyph><path d="M14 6V21L29 13.500Z" /><path d="M10 10H14M10 17H14M29 13.500H32M16 11H20M18 9V13M16 17H19" strokeWidth="1.500" /></Glyph>,
    },
    {
      name: "Capacitor",
      wide: true,
      icon: <Glyph w={46}><path d="M4 13.500H21M29 13.500H46" strokeWidth="1.500" /><path d="M21 3V23M29 3V23" /></Glyph>,
    },
    { name: "Resistor", wide: true, icon: <Glyph w={46}><rect x="6" y="8" width="37" height="10" /></Glyph> },
    { name: "Library", label: "LIB" },
    {
      name: "Wire",
      icon: <Glyph><path d="M8 12.500H29" strokeWidth="1.500" /><circle cx="8" cy="12.500" r="1.500" fill="#000" stroke="none" /><circle cx="29" cy="12.500" r="2" fill="#000" stroke="none" /></Glyph>,
    },
  ],
  [
    { name: "Low shelf", icon: <Glyph><path d="M3 6H15L23 14H35" stroke="#f00" /></Glyph> },
    {
      name: "High shelf",
      icon: <Glyph><path d="M3 14H14L23 6H35" stroke="#0020ff" /><circle cx="9" cy="8" r="1" fill="#444" stroke="none" /></Glyph>,
    },
    { name: "Peak", icon: <Glyph><path d="M3 17C13 14 13 6 19 6S25 14 35 17" stroke="#0a800a" /></Glyph> },
    {
      name: "Cross",
      icon: <Glyph><path d="M3 9L35 18" stroke="#f00" /><path d="M3 18L35 9" stroke="#0020ff" /></Glyph>,
    },
    { name: "Biquad", label: "BiQ" },
    { name: "Transfer function", label: "G(f)" },
    { name: "Inductor", wide: true, icon: <Glyph w={46}><path d={coilPath} transform="translate(4 12)" /></Glyph> },
    {
      name: "Transformer",
      wide: true,
      icon: <Glyph w={46}><path d="M5 13.500H13M37 13.500H45" strokeWidth="1.500" /><circle cx="21" cy="13.500" r="8" strokeWidth="1.500" /><circle cx="29" cy="13.500" r="8" strokeWidth="1.500" /></Glyph>,
    },
    { name: "Speaker", icon: <Glyph><path d="M12 8H18V19H12ZM18 9L25 4V23L18 18" /></Glyph> },
    { name: "Ground", icon: <Glyph><path d="M19 5V9M10 9H28L19 19Z" /></Glyph> },
    { name: "Text", label: "T", slim: true },
    { name: "Delete", label: "X", slim: true, active: true },
  ],
];

const parameters = [
  { name: "X", value: 0, unit: "mm", min: -2000, max: 2000 },
  { name: "Y", value: 105, unit: "mm", min: -5000, max: 5000 },
  { name: "Z", value: 0, unit: "mm", min: -2000, max: 2000 },
  { name: "R", value: 0, unit: "deg", min: -180, max: 180 },
  { name: "T", value: 0, unit: "deg", min: -180, max: 180 },
];

const Arrow = ({ dir }) => {
  const d = { up: "M2 8L6 4L10 8", down: "M2 4L6 8L10 4", left: "M8 2L4 6L8 10", right: "M4 2L8 6L4 10" }[dir];
  return (
    <svg width="12" height="12" aria-hidden="true">
      <path d={d} fill="none" stroke="#505050" strokeWidth="2" />
    </svg>
  );
};

const App = () => (
  <>
    <GlobalStyle />
    <Page>
      <LeftPane>
        <Header>
          <HeaderMain>
            <MenuBar>
              {["File", "View", "Tools", "Options", "Help"].map((item) => (
                <MenuItem key={item}>{item}</MenuItem>
              ))}
            </MenuBar>
            <TabRow role="tablist">
              <Tab role="tab">Drivers</Tab>
              <Tab role="tab" $active>
                Crossover
              </Tab>
              <Tab role="tab">Room</Tab>
            </TabRow>
          </HeaderMain>
          <HeaderFields>
            <Field $w={30} $center aria-label="Grid columns" defaultValue="30" />
            <Field $w={30} $center aria-label="Grid rows" defaultValue="9" />
            <ZoomButtons>
              <Button $w={28}>1:1</Button>
              <Button $w={28}>Fit</Button>
            </ZoomButtons>
          </HeaderFields>
        </Header>

        <TabPage>
          <Toolbar>
            {toolRows.map((row, i) => (
              <ToolRow key={i}>
                {row.map((tool) => (
                  <Tool key={tool.name} aria-label={tool.name} $wide={tool.wide} $slim={tool.slim} $active={tool.active}>
                    {tool.icon || tool.label}
                  </Tool>
                ))}
                {i === 0 && (
                  <CheckLabel $indent={3}>
                    <Check type="checkbox" defaultChecked />
                    Stretch
                  </CheckLabel>
                )}
              </ToolRow>
            ))}
          </Toolbar>

          <CanvasGrid>
            <Canvas>
              <Schematic />
            </Canvas>
            <ScrollV>
              <Arrow dir="up" />
              <ScrollSpace>
                <ThumbV />
              </ScrollSpace>
              <Arrow dir="down" />
            </ScrollV>
            <ScrollH>
              <Arrow dir="left" />
              <ThumbH />
              <Arrow dir="right" />
            </ScrollH>
          </CanvasGrid>

          <Bottom>
            <BottomMain>
              <DriverRow>
                <DriverLabel htmlFor="driver">Driver</DriverLabel>
                <SelectWrap>
                  <Select id="driver">
                    <option>Tw_Tymphany_DX20BF00-4</option>
                    <option>Wf_Tymphany_830656</option>
                  </Select>
                  <Chevron width="10" height="6" aria-hidden="true">
                    <path d="M1 1L5 5L9 1" fill="none" stroke="#555" />
                  </Chevron>
                </SelectWrap>
                <LetterButtons>
                  {["O", "S", "I", "M", "R", "H"].map((letter) => (
                    <Button key={letter} $w={22} $h={21} disabled={letter === "R"}>
                      {letter}
                    </Button>
                  ))}
                </LetterButtons>
              </DriverRow>
              <EditRow>
                <Table>
                  <colgroup>
                    {[32, 45, 50, 32, 50, 50, 81].map((w, i) => (
                      <Col key={i} $w={w} />
                    ))}
                  </colgroup>
                  <thead>
                    <tr>
                      {["Opt", "Name", "Value", "Unit", "Min", "Max", "Expression"].map((h) => (
                        <Th key={h}>{h}</Th>
                      ))}
                    </tr>
                  </thead>
                  <tbody>
                    {parameters.map((p, i) => (
                      <tr key={p.name}>
                        <Td $tone={i === 0 ? "#0078d7" : undefined}>
                          <Check type="checkbox" aria-label={`Optimise ${p.name}`} $block />
                        </Td>
                        <Td $tone="#f0f0f0">{p.name}</Td>
                        <Td $num>{p.value}</Td>
                        <Td $tone="#f0f0f0">{p.unit}</Td>
                        <Td $num>{p.min}</Td>
                        <Td $num>{p.max}</Td>
                        <Td />
                      </tr>
                    ))}
                  </tbody>
                </Table>
                <Side>
                  <SideTop>
                    <MoveButtons>
                      <Button $w={21} $h={20} aria-label="Move up">
                        <svg width="15" height="12">
                          <path d="M7.500 1L14 12H1Z" fill="#404040" />
                        </svg>
                      </Button>
                      <Button $w={21} $h={20} aria-label="Move down">
                        <svg width="15" height="12">
                          <path d="M7.500 11L14 0H1Z" fill="#404040" />
                        </svg>
                      </Button>
                    </MoveButtons>
                    <SnapGroup>
                      <Legend>Snap</Legend>
                      <RadioLabel>
                        <Radio type="radio" name="snap" defaultChecked />5 %
                      </RadioLabel>
                      {["12", "24", "48"].map((n) => (
                        <RadioLabel key={n}>
                          <Radio type="radio" name="snap" />
                          <span>
                            E{n[0]}
                            <u>{n[1]}</u>
                          </span>
                        </RadioLabel>
                      ))}
                    </SnapGroup>
                  </SideTop>
                  <PartRow>
                    <label htmlFor="part">Part #</label>
                    <Field $w={49} id="part" defaultValue="D1" />
                  </PartRow>
                </Side>
              </EditRow>
            </BottomMain>
            <VariantGroup>
              <Legend>Variant</Legend>
              {steps(1, 8, 1).map((n) => (
                <VariantRow key={n}>
                  <Button $w={28} $h={19} $color="#ff0000">
                    S{n}
                  </Button>
                  <Button $w={30} $h={19} $picked={n === 1} disabled={n > 1}>
                    R{n}
                  </Button>
                </VariantRow>
              ))}
            </VariantGroup>
          </Bottom>
        </TabPage>
      </LeftPane>

      <RightPane>
        <TopBar>
          <TopLabel>
            Ref angle
            <Field $w={40} $center defaultValue="0" />
          </TopLabel>
          <TopText $w={51}>deg hor</TopText>
          <CheckLabel>
            <Check type="checkbox" />
            SPL max
          </CheckLabel>
          <SpinGroup>
            <Field $w={40} $center aria-label="SPL max level" defaultValue="90" disabled />
            <Button $w={20} $h={21} aria-label="Expand range">
              <svg width="14" height="17">
                <path d="M7 0L13 7H1ZM7 17L13 10H1Z" fill="#404040" />
              </svg>
            </Button>
            <Button $w={20} $h={21} aria-label="Shrink range">
              <svg width="14" height="17">
                <path d="M1 1H13L7 8ZM1 16H13L7 9ZM1 1H13M1 16H13" fill="#404040" stroke="#404040" />
              </svg>
            </Button>
          </SpinGroup>
          <TopText $w={28}>Ovl</TopText>
          <OverlayButtons>
            <Button $w={26} $h={22} aria-label="Add overlay">
              <svg width="22" height="20">
                <rect x="1" y="0" width="20" height="20" rx="8" fill="#30b090" />
                <path d="M5 10H17M11 4V16" stroke="#fff" strokeWidth="2" />
              </svg>
            </Button>
            <Button $w={26} $h={22} aria-label="Remove overlay">
              <svg width="22" height="20">
                <rect x="1" y="0" width="20" height="20" rx="8" fill="#30b090" />
                <path d="M5 10H17" stroke="#fff" strokeWidth="2" />
              </svg>
            </Button>
          </OverlayButtons>
          <Field $w={290} aria-label="Overlay name" defaultValue="T_3o_W_2o_V8" />
          <RangeGroup>
            <Field $w={35} $center aria-label="From frequency" defaultValue="20" />
            <span>...</span>
            <Field $w={40} $center aria-label="To frequency" defaultValue="20000" />
            <span>Hz</span>
          </RangeGroup>
        </TopBar>
        <ChartGrid>
          {charts.map((chart) => (
            <Chart key={chart.title} {...chart} />
          ))}
        </ChartGrid>
      </RightPane>
    </Page>
  </>
);

export default App;

const GlobalStyle = createGlobalStyle`
  * {
    box-sizing: border-box;
  }
  body {
    margin: 0;
    background: #f0f0f0;
    color: #000;
    font: 11px/14px "Liberation Sans", Arial, sans-serif;
  }
  button, input, select {
    font: inherit;
    color: inherit;
    margin: 0;
  }
`;
const Page = styled.div`
  display: flex;
  height: 100vh;
  min-height: 800px;
`;
const LeftPane = styled.div`
  flex: 0 0 530px;
  display: flex;
  flex-direction: column;
  padding: 0 1px 2px 2px;
`;
const Header = styled.div`
  display: flex;
  height: 45px;
`;
const HeaderMain = styled.div`
  width: 387px;
  display: flex;
  flex-direction: column;
  justify-content: space-between;
`;
const MenuBar = styled.div`
  height: 24px;
  display: flex;
  align-items: center;
  gap: 17px;
  padding-left: 11px;
  background: linear-gradient(90deg, #f0f0f0, #fafafa);
`;
const MenuItem = styled.button`
  border: 0;
  padding: 0;
  background: none;
  font: 12px/16px "Open Sans", "Noto Sans", sans-serif;
`;
const TabRow = styled.div`
  display: flex;
  align-items: flex-end;
  padding-left: 1px;
`;
const Tab = styled.button`
  height: ${(props) => (props.$active ? "21px" : "18px")};
  padding: ${(props) => (props.$active ? "0 5px 2px" : "0 3px")};
  border: 1px solid #d9d9d9;
  border-bottom: 0;
  background: ${(props) => (props.$active ? "#fff" : "#f0f0f0")};
`;
const HeaderFields = styled.div`
  display: flex;
  gap: 3px;
  padding: 19px 0 0 7px;
`;
const ZoomButtons = styled.div`
  display: flex;
  gap: 5px;
  padding-left: 4px;
`;
const Field = styled.input`
  width: ${(props) => props.$w}px;
  height: 20px;
  padding: 0 3px;
  border: 1px solid #7a7a7a;
  background: #fff;
  text-align: ${(props) => (props.$center ? "center" : "left")};
  &:disabled {
    background: #f0f0f0;
    border-color: #ccc;
    color: #808080;
  }
`;
const Button = styled.button`
  width: ${(props) => props.$w}px;
  height: ${(props) => props.$h || 20}px;
  display: flex;
  align-items: center;
  justify-content: center;
  padding: 0;
  border: 1px solid ${(props) => (props.$picked ? "#00549e" : "#adadad")};
  background: ${(props) => (props.$picked ? "#cce4f7" : "#e1e1e1")};
  color: ${(props) => (props.$picked ? "#0000ff" : props.$color || "#000")};
  font-size: ${(props) => (props.$picked ? "12px" : "11px")};
  font-weight: ${(props) => (props.$picked ? 700 : 400)};
  &:disabled {
    border-color: #bfbfbf;
    background: #ccc;
    color: #a0a0a0;
  }
`;
const TabPage = styled.div`
  flex: 1;
  min-height: 0;
  display: flex;
  flex-direction: column;
  border: 1px solid #dcdcdc;
  box-shadow: inset 2px 2px 0 #fff;
  padding: 0 2px 0 8px;
`;
const Toolbar = styled.div`
  display: flex;
  flex-direction: column;
  gap: 3px;
  padding: 9px 0 11px 3px;
`;
const ToolRow = styled.div`
  display: flex;
  gap: 3px;
`;
const Tool = styled.button`
  width: ${(props) => (props.$wide ? 48 : props.$slim ? 22 : 37)}px;
  height: 25px;
  display: flex;
  align-items: center;
  justify-content: center;
  padding: 0;
  border: 1px solid #6a6a6a;
  background: ${(props) => (props.$active ? "#add8e6" : "#dcdcdc")};
`;
const CheckLabel = styled.label`
  display: flex;
  align-items: center;
  gap: 6px;
  margin-left: ${(props) => props.$indent || 0}px;
`;
const Check = styled.input`
  appearance: none;
  display: ${(props) => (props.$block ? "block" : "inline-block")};
  width: 13px;
  height: 13px;
  margin: ${(props) => (props.$block ? "0 auto" : "0")};
  border: 1px solid #333;
  background: #fff;
  &:checked::after {
    content: "";
    display: block;
    width: 4px;
    height: 7px;
    margin: 0 auto;
    border: solid #333;
    border-width: 0 1px 1px 0;
    transform: rotate(42deg);
  }
`;
const CanvasGrid = styled.div`
  flex: 1;
  min-height: 0;
  display: grid;
  grid-template-columns: 1fr 15px;
  grid-template-rows: 1fr 15px;
`;
const Canvas = styled.div`
  min-width: 0;
  min-height: 0;
  overflow: hidden;
  background: #fff;
`;
const SchematicSvg = styled.svg`
  display: block;
  font-size: 11px;
`;
const ScrollV = styled.div`
  display: flex;
  flex-direction: column;
  align-items: center;
  min-height: 0;
  padding-bottom: 3px;
`;
const ScrollSpace = styled.div`
  flex: 1;
  align-self: stretch;
`;
const ThumbV = styled.div`
  height: 49%;
  background: #cdcdcd;
`;
const ScrollH = styled.div`
  display: flex;
  align-items: center;
  padding-right: 3px;
`;
const ThumbH = styled.div`
  width: 117px;
  height: 15px;
  margin: 0 auto 0 2px;
  background: #cdcdcd;
`;
const Bottom = styled.div`
  display: flex;
  justify-content: space-between;
  padding: 5px 0 4px 5px;
`;
const BottomMain = styled.div`
  display: flex;
  flex-direction: column;
  gap: 8px;
`;
const DriverRow = styled.div`
  display: flex;
  align-items: center;
`;
const DriverLabel = styled.label`
  width: 37px;
`;
const SelectWrap = styled.div`
  position: relative;
  width: 168px;
`;
const Select = styled.select`
  appearance: none;
  width: 100%;
  height: 21px;
  padding: 0 3px;
  border: 1px solid #adadad;
  border-radius: 0;
  background: #e1e1e1;
`;
const Chevron = styled.svg`
  position: absolute;
  right: 4px;
  top: 8px;
  pointer-events: none;
`;
const LetterButtons = styled.div`
  display: flex;
  gap: 2px;
  margin-left: auto;
`;
const EditRow = styled.div`
  display: flex;
  gap: 7px;
`;
const Table = styled.table`
  width: 343px;
  table-layout: fixed;
  border-collapse: collapse;
  border: 2px solid #000;
  background: #fff;
  align-self: flex-start;
`;
const Col = styled.col`
  width: ${(props) => props.$w}px;
`;
const Th = styled.th`
  height: 22px;
  padding: 0 0 0 7px;
  border-right: 1px solid #ddd;
  font-weight: 400;
  text-align: left;
`;
const Td = styled.td`
  height: 22px;
  padding: 0 3px;
  border: 1px solid #a0a0a0;
  background: ${(props) => props.$tone || "#fff"};
  text-align: ${(props) => (props.$num ? "right" : "left")};
`;
const Side = styled.div`
  width: 85px;
  display: flex;
  flex-direction: column;
  justify-content: space-between;
`;
const SideTop = styled.div`
  display: flex;
  justify-content: space-between;
`;
const MoveButtons = styled.div`
  display: flex;
  flex-direction: column;
  gap: 5px;
`;
const SnapGroup = styled.fieldset`
  width: 58px;
  display: flex;
  flex-direction: column;
  gap: 8px;
  margin: 0;
  padding: 4px 0 10px 7px;
  border: 1px solid #dcdcdc;
`;
const Legend = styled.legend`
  padding: 0 2px;
`;
const RadioLabel = styled.label`
  display: flex;
  align-items: center;
  gap: 6px;
`;
const Radio = styled.input`
  appearance: none;
  width: 13px;
  height: 13px;
  border: 1px solid #333;
  border-radius: 50%;
  background: #fff;
  &:checked {
    background: radial-gradient(#333 0 3px, #fff 4px);
  }
`;
const PartRow = styled.div`
  display: flex;
  align-items: center;
  justify-content: space-between;
`;
const VariantGroup = styled.fieldset`
  display: flex;
  flex-direction: column;
  gap: 3px;
  margin: 0;
  padding: 0 4px 4px 3px;
  border: 1px solid #dcdcdc;
`;
const VariantRow = styled.div`
  display: flex;
  gap: 2px;
`;
const RightPane = styled.div`
  flex: 1;
  min-width: 0;
  display: flex;
  flex-direction: column;
  padding: 0 3px 15px 10px;
`;
const TopBar = styled.div`
  display: flex;
  align-items: center;
  height: 32px;
  padding: 0 4px 3px;
  white-space: nowrap;
`;
const TopLabel = styled.label`
  display: flex;
  align-items: center;
  justify-content: space-between;
  width: 92px;
`;
const TopText = styled.span`
  width: ${(props) => props.$w}px;
  padding-left: 4px;
`;
const SpinGroup = styled.div`
  display: flex;
  gap: 3px;
  margin: 0 5px 0 6px;
`;
const OverlayButtons = styled.div`
  display: flex;
  gap: 5px;
  margin-right: 4px;
`;
const RangeGroup = styled.div`
  display: flex;
  align-items: center;
  gap: 5px;
  margin-left: auto;
`;
const ChartGrid = styled.div`
  flex: 1;
  min-height: 0;
  display: grid;
  grid-template-columns: 1fr 1fr;
  grid-auto-rows: 1fr;
  gap: 6px;
`;
const ChartCard = styled.section`
  min-width: 0;
  min-height: 0;
  background: #fff;
`;
const ChartSvg = styled.svg`
  display: block;
  width: 100%;
  height: 100%;
  font-size: 11px;
`;
